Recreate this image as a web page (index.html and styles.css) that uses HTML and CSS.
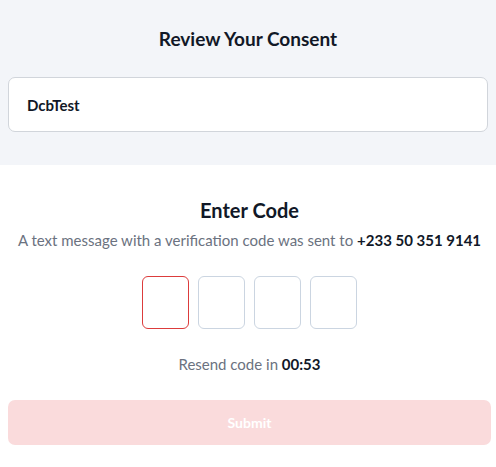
FILE: index.html
```html
<!DOCTYPE html>
<html>
<head>
<meta charset="utf-8">
<link rel="stylesheet" href="styles.css">
</head>
<body>
<div class="top">
  <h1 class="title">Review Your Consent</h1>
  <div class="card">DcbTest</div>
</div>
<div class="main">
  <h2 class="heading">Enter Code</h2>
  <p class="sub">A text message with a verification code was sent to <b>+233 50 351 9141</b></p>
  <div class="otp">
    <div class="box active"></div>
    <div class="box"></div>
    <div class="box"></div>
    <div class="box"></div>
  </div>
  <p class="resend">Resend code in <b>00:53</b></p>
  <button class="submit">Submit</button>
</div>
</body>
</html>
```
FILE: styles.css
```css
* { box-sizing: border-box; }
html, body { margin: 0; padding: 0; background: #fff; }
body { font-family: Lato, "Open Sans", sans-serif; color: #111827; width: 496px; }
.top {
  background: #f3f5f9;
  padding: 28px 8px 33px;
}
.title {
  margin: 0;
  text-align: center;
  font-size: 19px;
  font-weight: 700;
  line-height: 22px;
  color: #111827;
}
.card {
  margin-top: 27px;
  height: 55px;
  background: #fff;
  border: 1px solid #d1d5db;
  border-radius: 7px;
  padding: 0 18px;
  display: flex;
  align-items: center;
  font-size: 15px;
  font-weight: 700;
}
.main { padding: 33px 5px 0 8px; display: flex; flex-direction: column; align-items: center; }
.heading { margin: 0; font-size: 20px; line-height: 24px; font-weight: 700; }
.sub { margin: 8px 0 0; font-size: 15px; line-height: 20px; color: #6b7280; white-space: nowrap; }
.sub b { color: #111827; }
.otp { display: flex; gap: 9px; margin-top: 26px; }
.box { width: 47px; height: 53px; border: 1px solid #cbd5e1; border-radius: 6px; }
.box.active { border-color: #dc3c3c; }
.resend { margin: 25px 0 0; font-size: 15px; line-height: 20px; color: #6b7280; }
.resend b { color: #111827; }
.submit {
  margin-top: 26px;
  height: 45px;
  border: none;
  border-radius: 7px;
  background: #fadbdc;
  color: #fff;
  font-family: inherit;
  font-size: 14px;
  font-weight: 700;
  align-self: stretch;
}
```
